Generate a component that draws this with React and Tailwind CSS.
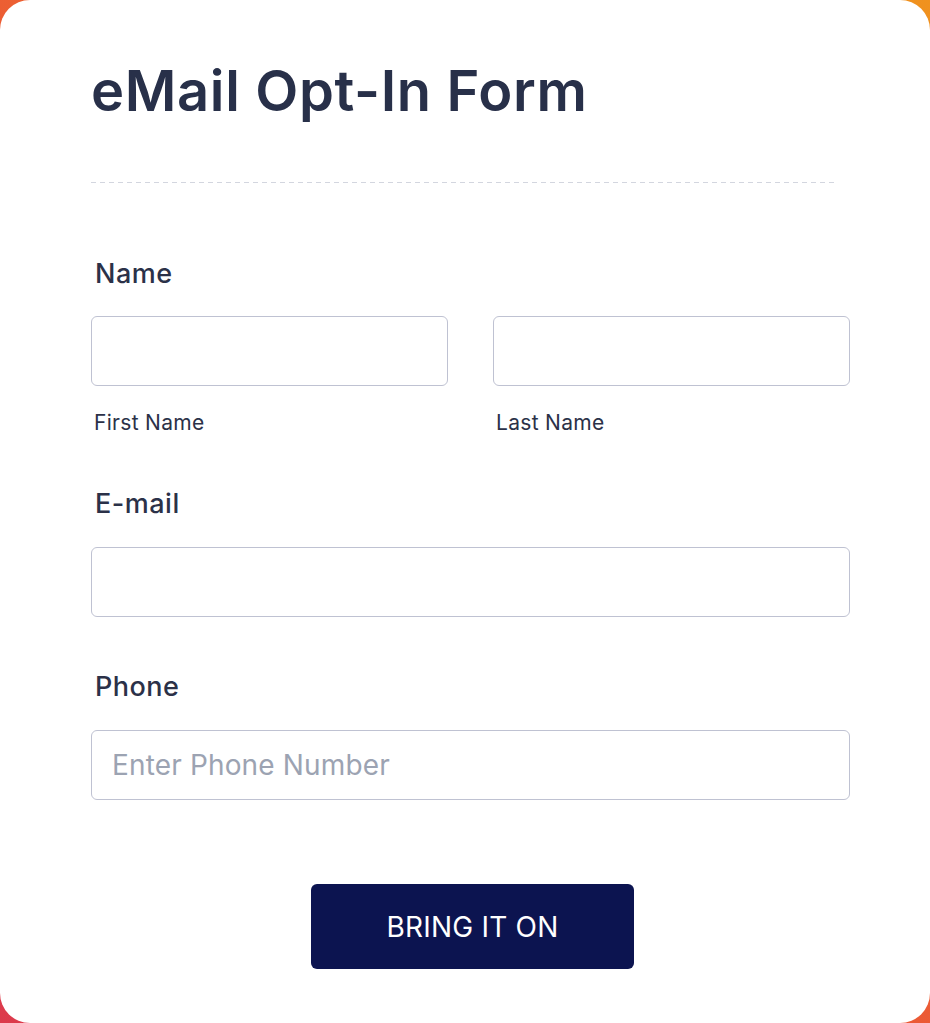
const inputClass =
  "h-[70px] w-full rounded-[6px] border border-[#bfc2d2] bg-white px-5 text-[28px] tracking-[0.15px] text-[#2b3148] outline-none placeholder:text-[#9ca3b2]";

const Label = ({ children, className = "" }) => (
  <p className={`pl-1 text-[27px] font-medium leading-[25px] tracking-[0.5px] text-[#2b3148] ${className}`}>{children}</p>
);

export default function App() {
  return (
    <div
      className="h-[1023px] w-[930px] overflow-hidden bg-[linear-gradient(45deg,#dc3a4c_0%,#ec5c34_50%,#f0921e_100%)]"
      style={{ fontFamily: "Inter, 'Noto Sans', sans-serif" }}
    >
      <div className="h-full w-full rounded-[30px] bg-white pl-[91px] pr-[80px] pt-[61px]">
        <h1 className="text-[56px] font-semibold leading-[60px] tracking-[0.65px] text-[#283049]">
          eMail Opt-In Form
        </h1>

        {/* divider */}
        <div className="mt-[61px] mr-[13px] h-px bg-[repeating-linear-gradient(to_right,#d3d6df_0_5px,transparent_5px_9px)]" />

        <form className="mt-[78px]" onSubmit={(e) => e.preventDefault()}>
          <Label>Name</Label>
          <div className="mt-[30px] grid grid-cols-2 gap-[45px]">
            <div>
              <input className={inputClass} />
              <p className="mt-[27px] pl-[3px] text-[21px] leading-[19px] tracking-[0.3px] text-[#2b3148]">First Name</p>
            </div>
            <div>
              <input className={inputClass} />
              <p className="mt-[27px] pl-[3px] text-[21px] leading-[19px] tracking-[0.3px] text-[#2b3148]">Last Name</p>
            </div>
          </div>

          <Label className="mt-[59px]">E-mail</Label>
          <input className={`${inputClass} mt-[31px]`} />

          <Label className="mt-[57px]">Phone</Label>
          <input className={`${inputClass} mt-[31px]`} placeholder="Enter Phone Number" />

          <div className="mt-[84px] flex justify-center pl-[4px]">
            <button
              type="submit"
              className="h-[85px] w-[323px] rounded-[6px] bg-[#0c1450] text-[28px] tracking-[0.2px] text-white"
            >
              BRING IT ON
            </button>
          </div>
        </form>
      </div>
    </div>
  );
}
